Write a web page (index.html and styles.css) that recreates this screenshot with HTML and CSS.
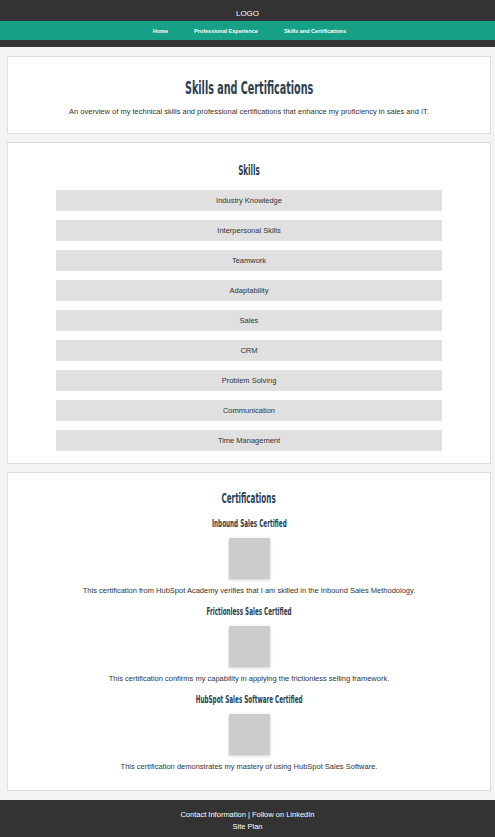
FILE: index.html
```html
<!DOCTYPE html>
<html lang="en">
<head>
<meta charset="utf-8">
<title>Skills and Certifications</title>
<link rel="stylesheet" href="styles.css">
</head>
<body>
<header class="site-header">
  <div class="logo">LOGO</div>
  <nav class="nav">
    <a href="#">Home</a>
    <a href="#">Professional Experience</a>
    <a href="#">Skills and Certifications</a>
  </nav>
</header>
<main class="main">
  <section class="card intro">
    <h1 class="h1"><span>Skills and Certifications</span></h1>
    <p class="lead">An overview of my technical skills and professional certifications that enhance my proficiency in sales and IT.</p>
  </section>
  <section class="card skills">
    <h2 class="h2"><span>Skills</span></h2>
    <ul class="skill-list">
      <li>Industry Knowledge</li>
      <li>Interpersonal Skills</li>
      <li>Teamwork</li>
      <li>Adaptability</li>
      <li>Sales</li>
      <li>CRM</li>
      <li>Problem Solving</li>
      <li>Communication</li>
      <li>Time Management</li>
    </ul>
  </section>
  <section class="card certs">
    <h2 class="h2"><span>Certifications</span></h2>
    <div class="cert">
      <h3 class="h3"><span>Inbound Sales Certified</span></h3>
      <div class="badge"></div>
      <p class="desc">This certification from HubSpot Academy verifies that I am skilled in the Inbound Sales Methodology.</p>
    </div>
    <div class="cert">
      <h3 class="h3"><span>Frictionless Sales Certified</span></h3>
      <div class="badge"></div>
      <p class="desc">This certification confirms my capability in applying the frictionless selling framework.</p>
    </div>
    <div class="cert">
      <h3 class="h3"><span>HubSpot Sales Software Certified</span></h3>
      <div class="badge"></div>
      <p class="desc">This certification demonstrates my mastery of using HubSpot Sales Software.</p>
    </div>
  </section>
</main>
<footer class="site-footer">
  <div>Contact Information | Follow on LinkedIn</div>
  <div>Site Plan</div>
</footer>
</body>
</html>
```
FILE: styles.css
```css
* { box-sizing: border-box; }
html, body { margin: 0; padding: 0; }
body {
  background: #f4f4f4;
  color: #333;
  font-family: "Liberation Sans", Arial, sans-serif;
  font-size: 7.5px;
  line-height: 12px;
}
.site-header {
  background: #333;
  padding: 8px 0 7px;
  text-align: center;
}
.logo {
  color: #fff;
  font-size: 8px;
  line-height: 11px;
  margin-bottom: 2px;
}
.nav {
  background: #16a085;
  height: 19px;
  display: flex;
  justify-content: center;
  align-items: center;
  gap: 26px;
  padding-left: 4px;
}
.nav a {
  color: #fff;
  text-decoration: none;
  font-weight: bold;
  font-size: 5.5px;
}
.main {
  padding: 9px 4px 0 7px;
  display: flex;
  flex-direction: column;
  gap: 8px;
}
.card {
  background: #fff;
  border: 1px solid #ddd;
  text-align: center;
}
.h1, .h2, .h3 {
  margin: 0;
  color: #2c3e50;
  font-family: "DejaVu Sans Condensed", "DejaVu Sans", sans-serif;
  font-weight: bold;
}
.h1 span, .h2 span, .h3 span {
  display: inline-block;
}
.h1 { font-size: 17.5px; line-height: 22px; }
.h1 span { transform: scaleX(0.61); }
.h2 { font-size: 14px; line-height: 18px; }
.h2 span { transform: scaleX(0.57); }
.h3 { font-size: 10.5px; line-height: 14px; }
.h3 span { transform: scaleX(0.6); }
.intro { padding: 20px 10px 15px; }
.lead { margin: 7px 0 0; }
.skills { padding: 18px 0 12px; }
.skill-list {
  list-style: none;
  margin: 11px auto 0;
  padding: 0;
  width: 80%;
  display: flex;
  flex-direction: column;
  gap: 9px;
}
.skill-list li {
  background: #e0e0e0;
  height: 21px;
  line-height: 21px;
}
.certs { padding: 16px 0 17px; }
.cert { margin-top: 9px; }
.cert + .cert { margin-top: 7px; }
.badge {
  width: 41px;
  height: 41px;
  margin: 8px auto 6px;
  background: #ccc;
  box-shadow: 0 1px 3px rgba(0,0,0,0.2);
}
.desc { margin: 0; }
.site-footer {
  margin-top: 9px;
  background: #333;
  color: #fff;
  text-align: center;
  padding: 9px 0;
}
```
